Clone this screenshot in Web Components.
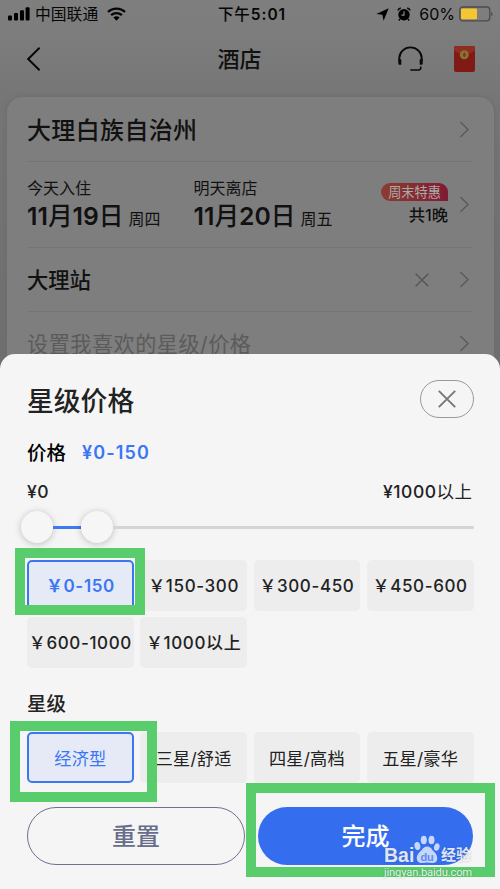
<!DOCTYPE html>
<html lang="zh-CN">
<head>
<meta charset="utf-8">
<title>酒店</title>
<style>
html,body{margin:0;height:889px;overflow:hidden}
body{font-family:Inter,"Noto Sans CJK SC",sans-serif;color:#111}
</style>
</head>
<body>
<hotel-app></hotel-app>
<script>
function define(name, html, setup) {
  const tpl = document.createElement('template');
  tpl.innerHTML = html;
  customElements.define(name, class extends HTMLElement {
    constructor() {
      super();
      this.attachShadow({mode: 'open'}).append(tpl.content.cloneNode(true));
    }
    connectedCallback() { if (setup) setup(this, this.shadowRoot); }
  });
}

define('status-bar', `<style>
:host{display:flex;height:28px;align-items:center;box-sizing:border-box;padding:0 7px 0 8px;color:#060606;font-size:16px;white-space:nowrap}
svg{display:block;flex:none}
.l,.r{flex:1;display:flex;align-items:center}
.r{justify-content:flex-end}
.time{font-weight:600;font-size:15.5px;letter-spacing:.95px;margin:-2px 0 0 3px}
.time i{font-style:normal;font-weight:500}
.c{font-size:15.8px;margin:-1px 9px 0 5px}
.p{font-size:16px;margin:0 4px 0 8px}
</style>
<div class="l">
<svg width="22" height="14" viewBox="0 0 22 14"><rect y="8.5" width="4" height="5" rx="1"/><rect x="6" y="6" width="4" height="7.5" rx="1"/><rect x="12" y="3.2" width="4" height="10.3" rx="1"/><rect x="17.6" y=".2" width="4" height="13.3" rx="1"/></svg>
<span class="c">中国联通</span>
<svg width="19" height="14" viewBox="0 0 19 14"><g fill="none" stroke="#060606" stroke-width="2.3"><path d="M1 5A12.2 12.2 0 0 1 18 5"/><path d="M4.1 8.2A7.8 7.8 0 0 1 14.9 8.2"/></g><path d="M6.4 10.6A4.4 4.4 0 0 1 12.6 10.6L9.5 13.8Z"/></svg>
</div>
<span class="time"><i>下午</i>5:01</span>
<div class="r">
<svg width="13" height="13" viewBox="0 0 13 13"><path d="M12.7 .3L7.6 12.7L6.4 6.8L.3 6Z"/></svg>
<svg style="margin-left:8px" width="14" height="14" viewBox="0 0 14 14"><circle cx="7" cy="7.8" r="5.7"/><path d="M.9 3.4Q1.6 1.4 3.8 .9M13.1 3.4Q12.4 1.4 10.2 .9M3 12L1.8 13.4M11 12L12.2 13.4" fill="none" stroke="#060606" stroke-width="1.5"/><path d="M7 4.3V8.1H4.4" fill="none" stroke="#888" stroke-width="1.2"/></svg>
<span class="p">60%</span>
<svg width="34" height="16" viewBox="0 0 34 16"><rect x=".8" y="1" width="30" height="13.8" rx="3" fill="none" stroke="#4b4b4b" stroke-width="1.3"/><rect x="2" y="2.6" width="16" height="10.6" rx="1" fill="#f5c532"/><path d="M32.3 5.7Q33.6 6.2 33.6 8T32.3 10.3Z" fill="#4b4b4b"/></svg>
</div>`);

define('nav-bar', `<style>
:host{display:flex;height:69px;box-sizing:border-box;align-items:center;padding:0 25px 7px 27px;color:#111}
svg{display:block}
.s{flex:1;display:flex;align-items:center}
.e{justify-content:flex-end;gap:31px}
h1{margin:-1px 23px 0 0;font-size:22px;font-weight:500;line-height:30px}
</style>
<div class="s"><svg width="14" height="24" viewBox="0 0 14 24"><path d="M12.6 .8L1.2 12L12.6 23.2" fill="none" stroke="#070707" stroke-width="1.9"/></svg></div>
<h1>酒店</h1>
<div class="s e">
<svg width="25" height="26" viewBox="0 0 25 26"><path d="M1.3 14.5V12.2A11.2 10.8 0 0 1 23.7 12.2V14.5" fill="none" stroke="#090909" stroke-width="1.9"/><path d="M.3 13H2.4Q3.3 13 3.3 14V18.8H1.6Q.3 18.8 .3 17.4ZM24.7 13H22.6Q21.7 13 21.7 14V18.8H23.4Q24.7 18.8 24.7 17.4Z" fill="#090909"/><path d="M12.3 24H20.6Q22.8 24 22.8 21.6V20.6" fill="none" stroke="#090909" stroke-width="1.5"/></svg>
<svg width="21" height="26" viewBox="0 0 21 26"><rect width="21" height="26" rx="2" fill="#7f1a15"/><path d="M0 2Q0 0 2 0H19Q21 0 21 2V4.5Q10.5 12.5 0 4.5Z" fill="#8e2d20"/><circle cx="10.3" cy="8.8" r="4.5" fill="#877335"/><path d="M10.3 6L12 9L10.3 11.5L8.8 9Z" fill="#803421"/></svg>
</div>`);

define('chevron-right', `<style>:host{display:block;width:11px;height:17px;flex:none}svg{display:block}</style>
<svg width="11" height="17" viewBox="0 0 11 17"><path d="M1.4 .9L9 8.5L1.4 16.1" fill="none" stroke="#5a5a5a" stroke-width="1.4"/></svg>`);

define('search-row', `<style>
:host{display:flex;align-items:center;box-sizing:border-box;border-bottom:1px solid #747474;height:65px;padding-right:3px;color:#111}
.m{flex:1;display:flex;align-items:center;white-space:nowrap}
</style><div class="m"><slot></slot></div><chevron-right></chevron-right>`);

define('stay-date', `<style>
:host{display:block;width:166.5px;color:#111;white-space:nowrap}
.a{font-size:16px;line-height:24px}
.b{display:flex;align-items:baseline;line-height:30px;gap:5px;margin-top:1px}
b{font-size:24.7px;font-weight:600}
b i{font-style:normal;font-weight:500}
.w{font-size:16px}
</style><div class="a"><slot name="label"></slot></div><div class="b"><b></b><span class="w"><slot></slot></span></div>`,
(el, r) => {
  const b = r.querySelector('b');
  b.innerHTML = '11<i>月</i>' + el.getAttribute('day') + '<i>日</i>';
});

define('search-card', `<style>
:host{display:block;margin:0 6px 0 7px;padding:0 21px 0 20px;height:300px;border-radius:15px;background:#7e7e7e;box-shadow:0 0 5px #6b6b6b}
.city{font-size:24px;letter-spacing:.35px;font-weight:500;margin-top:-2px}
.st{font-size:21.3px;font-weight:500;margin-top:-3px}
.ph{font-size:21.2px;letter-spacing:.45px;color:#5b5b5b;margin-top:-2px}
.n{margin-left:auto;margin-right:11px;display:flex;flex-direction:column;align-items:flex-end}
.tag{box-sizing:border-box;height:18px;line-height:18px;width:67px;text-align:center;font-size:13.2px;color:#aaa;border-radius:9px 9px 0 9px;background:linear-gradient(90deg,#8b3d30,#7f1b34)}
.one{font-size:16.3px;line-height:24px;font-weight:500;margin-top:2px}
.x{margin-left:auto;margin-right:30px;display:block}
</style>
<search-row style="height:65px"><span class="city">大理白族自治州</span></search-row>
<search-row style="height:86px">
<stay-date day="19"><span slot="label">今天入住</span>周四</stay-date>
<stay-date day="20"><span slot="label">明天离店</span>周五</stay-date>
<div class="n"><span class="tag">周末特惠</span><span class="one">共1晚</span></div>
</search-row>
<search-row style="height:64px"><span class="st">大理站</span><svg class="x" width="14" height="14" viewBox="0 0 14 14"><path d="M.7 .7L13.3 13.3M13.3 .7L.7 13.3" stroke="#555" stroke-width="1.4"/></svg></search-row>
<search-row style="height:64px"><span class="ph">设置我喜欢的星级/价格</span></search-row>`);

define('price-slider', `<style>
:host{display:flex;align-items:center;height:34px;margin-left:-6px}
i{display:block;width:32px;height:32px;border-radius:50%;background:#f6f6f6;box-shadow:0 1px 7px rgba(0,0,0,.23);flex:none}
b{display:block;height:3px;background:#3d79f0;width:28px}
u{display:block;height:3px;background:#d4d4d4;flex:1;border-radius:0 2px 2px 0}
</style><i></i><b></b><i></i><u></u>`);

define('option-chip', `<style>
:host{display:flex;align-items:center;justify-content:center;height:51px;box-sizing:border-box;border-radius:5px;background:#ededed;color:#222;font-size:17.2px;letter-spacing:.2px;padding-bottom:1px;white-space:nowrap;min-width:0}
:host([selected]){background:#e6eaf7;border:2px solid #3b76f3;color:#3b76f3}
:host([price]){font-size:17px;font-weight:500;letter-spacing:.62px;padding-bottom:2px}
:host([selected][price]){font-weight:600}
</style><slot></slot>`);

define('pill-button', `<style>
:host{display:flex;align-items:center;justify-content:center;height:58px;box-sizing:border-box;border:1.5px solid #6c7191;border-radius:29px;color:#686d8b;font-size:24px;font-weight:500;padding-bottom:3px}
:host([primary]){border:0;background:#346eef;color:#fff}
</style><slot></slot>`);

define('filter-sheet', `<style>
:host{display:block;position:absolute;left:0;top:354px;width:500px;height:535px;box-sizing:border-box;padding:26px 26.5px 0 27px;border-radius:15px 15px 0 0;background:#f5f5f5;color:#222}
header{display:flex;justify-content:space-between;align-items:center;height:38px}
h2{margin:3px 0 0;font-size:26.8px;font-weight:500;line-height:38px}
.close{display:flex;width:54px;height:38px;box-sizing:border-box;border:1px solid #999;border-radius:19px;align-items:center;justify-content:center}
.price{display:flex;align-items:center;height:28px;margin-top:21px;gap:16px}
h3{margin:0;font-size:19.5px;font-weight:500;line-height:28px}
.price h3{color:#000}
.val{color:#3b76f3;font-size:18px;font-weight:600;letter-spacing:1.15px;margin-top:-2px}
.range{display:flex;justify-content:space-between;font-size:17.5px;letter-spacing:.5px;font-weight:500;line-height:24px;height:24px;margin-top:13px;padding-right:1px}
.range i{font-style:normal;font-weight:400}
.grid{display:grid;grid-template-columns:repeat(4,1fr);gap:6px 6.5px}
.acts{display:grid;grid-template-columns:218px 215px;gap:13px;margin-top:24px}
</style>
<header><h2>星级价格</h2><span class="close"><svg width="18" height="18" viewBox="0 0 18 18"><path d="M.8 .8L17.2 17.2M17.2 .8L.8 17.2" stroke="#777" stroke-width="1.9"/></svg></span></header>
<div class="price"><h3>价格</h3><span class="val">¥0-150</span></div>
<div class="range"><span>¥0</span><span>¥1000<i>以上</i></span></div>
<price-slider style="margin-top:6px"></price-slider>
<div class="grid" style="margin-top:16px">
<option-chip price selected>&#xFFE5;0-150</option-chip><option-chip price>&#xFFE5;150-300</option-chip><option-chip price>&#xFFE5;300-450</option-chip><option-chip price>&#xFFE5;450-600</option-chip>
<option-chip price>&#xFFE5;600-1000</option-chip><option-chip price>&#xFFE5;1000以上</option-chip></div>
<h3 style="margin-top:22px">星级</h3>
<div class="grid" style="margin-top:14px"><option-chip selected>经济型</option-chip><option-chip>三星/舒适</option-chip><option-chip>四星/高档</option-chip><option-chip>五星/豪华</option-chip></div>
<div class="acts"><pill-button>重置</pill-button><pill-button primary>完成</pill-button></div>`);

define('highlight-box', `<style>:host{display:block;position:absolute;box-sizing:border-box;border:10px solid #59cd6b}</style>`);

define('water-mark', `<style>
:host{display:block;position:absolute;left:384px;top:835px;width:92px;color:rgba(255,255,255,.85);font-family:Roboto,"Noto Sans CJK SC",sans-serif;text-shadow:0 0 2px rgba(60,70,90,.4);white-space:nowrap}
.a{display:flex;align-items:flex-end;height:29px}
.bai{font:700 19.5px/20px "Liberation Sans",sans-serif;width:30px;height:19px}
.jy{font-size:15px;font-weight:700;margin-left:1px;line-height:20px;height:19px}
.u{width:max-content;font-size:11.2px;line-height:13px;margin-top:2px}
svg{display:block;flex:none}
text{font:700 11px "Liberation Sans",sans-serif;fill:#5e89ee;text-shadow:none}
</style>
<div class="a"><span class="bai">Bai</span>
<svg width="26" height="29" viewBox="0 0 26 29" fill="#c6d7fb"><ellipse cx="9.8" cy="5" rx="3" ry="4.3"/><ellipse cx="17.5" cy="5" rx="3" ry="4.3"/><ellipse cx="3.4" cy="11" rx="2.9" ry="4" transform="rotate(-12 3.4 11)"/><ellipse cx="22.8" cy="12" rx="2.7" ry="3.8" transform="rotate(15 22.8 12)"/><path d="M13 11.5Q16.5 11.5 18.5 15.2Q23.5 19 23.3 23.5Q22.8 28.3 18 28.1Q13 27 8 28.1Q2.9 28.2 2.7 23.3Q2.7 19 7.5 15.2Q10 11.5 13 11.5Z"/><text x="6.4" y="26">du</text></svg>
<span class="jy">经验</span></div><div class="u">jingyan.baidu.com</div>`,
(el, r) => {
  const u = r.querySelector('.u');
  u.style.letterSpacing = (88 - u.getBoundingClientRect().width) / 17 + 'px';
});

define('hotel-app', `<style>
:host{display:block;position:relative;width:500px;height:889px;overflow:hidden;background:linear-gradient(#7f7f7f 0,#7b7b7b 50px,#757575 110px,#6f6f6f 354px)}
</style>
<status-bar></status-bar><nav-bar></nav-bar><search-card></search-card>
<filter-sheet></filter-sheet>
<highlight-box style="left:15px;top:548px;width:129.5px;height:67px"></highlight-box>
<highlight-box style="left:10px;top:720.5px;width:147px;height:81.5px"></highlight-box>
<highlight-box style="left:246px;top:783px;width:249px;height:93.5px"></highlight-box>
<water-mark></water-mark>`);
</script>
</body>
</html>
